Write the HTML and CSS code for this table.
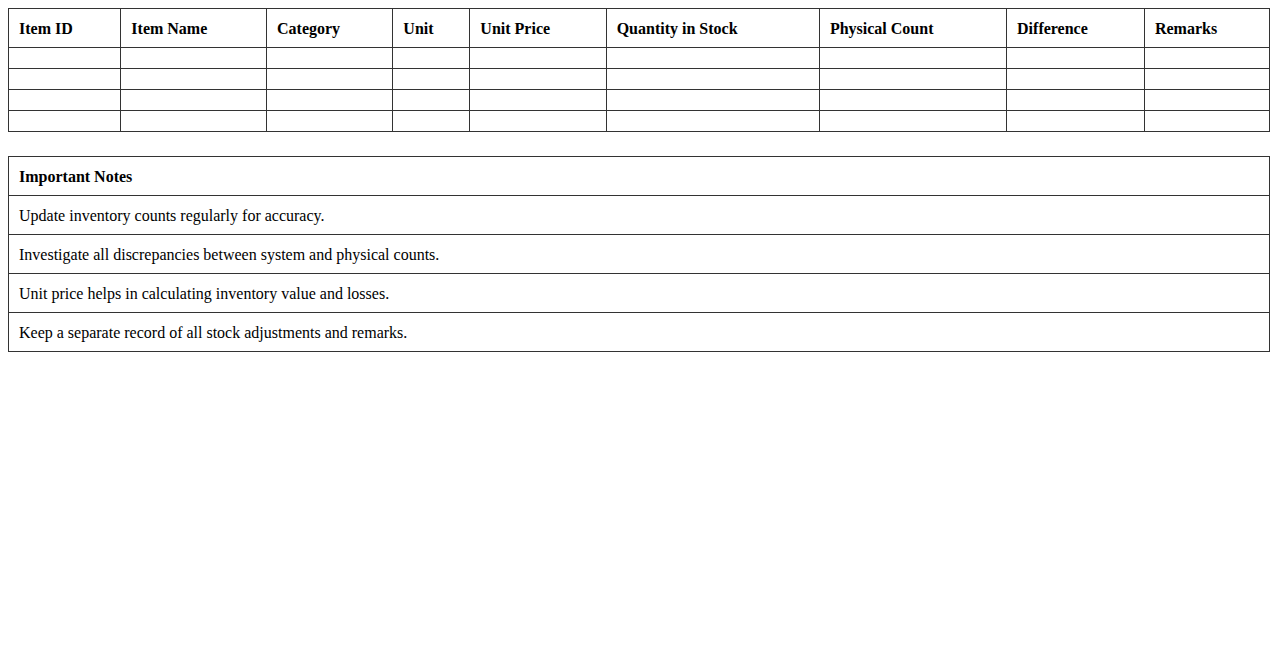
FILE: index.html
```html
<!DOCTYPE html>
<html>
<head>
<meta charset="utf-8">
<title>Inventory</title>
<link rel="stylesheet" href="styles.css">
</head>
<body>
<table class="grid">
  <thead>
    <tr>
      <th>Item ID</th>
      <th>Item Name</th>
      <th>Category</th>
      <th>Unit</th>
      <th>Unit Price</th>
      <th>Quantity in Stock</th>
      <th>Physical Count</th>
      <th>Difference</th>
      <th>Remarks</th>
    </tr>
  </thead>
  <tbody>
    <tr><td></td><td></td><td></td><td></td><td></td><td></td><td></td><td></td><td></td></tr>
    <tr><td></td><td></td><td></td><td></td><td></td><td></td><td></td><td></td><td></td></tr>
    <tr><td></td><td></td><td></td><td></td><td></td><td></td><td></td><td></td><td></td></tr>
    <tr><td></td><td></td><td></td><td></td><td></td><td></td><td></td><td></td><td></td></tr>
  </tbody>
</table>
<table class="grid notes">
  <thead>
    <tr><th>Important Notes</th></tr>
  </thead>
  <tbody>
    <tr><td>Update inventory counts regularly for accuracy.</td></tr>
    <tr><td>Investigate all discrepancies between system and physical counts.</td></tr>
    <tr><td>Unit price helps in calculating inventory value and losses.</td></tr>
    <tr><td>Keep a separate record of all stock adjustments and remarks.</td></tr>
  </tbody>
</table>
</body>
</html>
```
FILE: styles.css
```css
body {
  margin: 8px;
  font-family: "Liberation Serif", "Times New Roman", serif;
  font-size: 16px;
  color: #000;
  background: #fff;
}
.grid {
  width: 100%;
  border-collapse: collapse;
}
.grid th,
.grid td {
  border: 1px solid #333;
  padding: 10px;
  text-align: left;
  line-height: 18px;
}
.grid th:not(:empty),
.grid td:not(:empty) {
  padding-top: 11px;
  padding-bottom: 9px;
}
.grid th {
  font-weight: bold;
}
.notes {
  margin-top: 24px;
}
```
